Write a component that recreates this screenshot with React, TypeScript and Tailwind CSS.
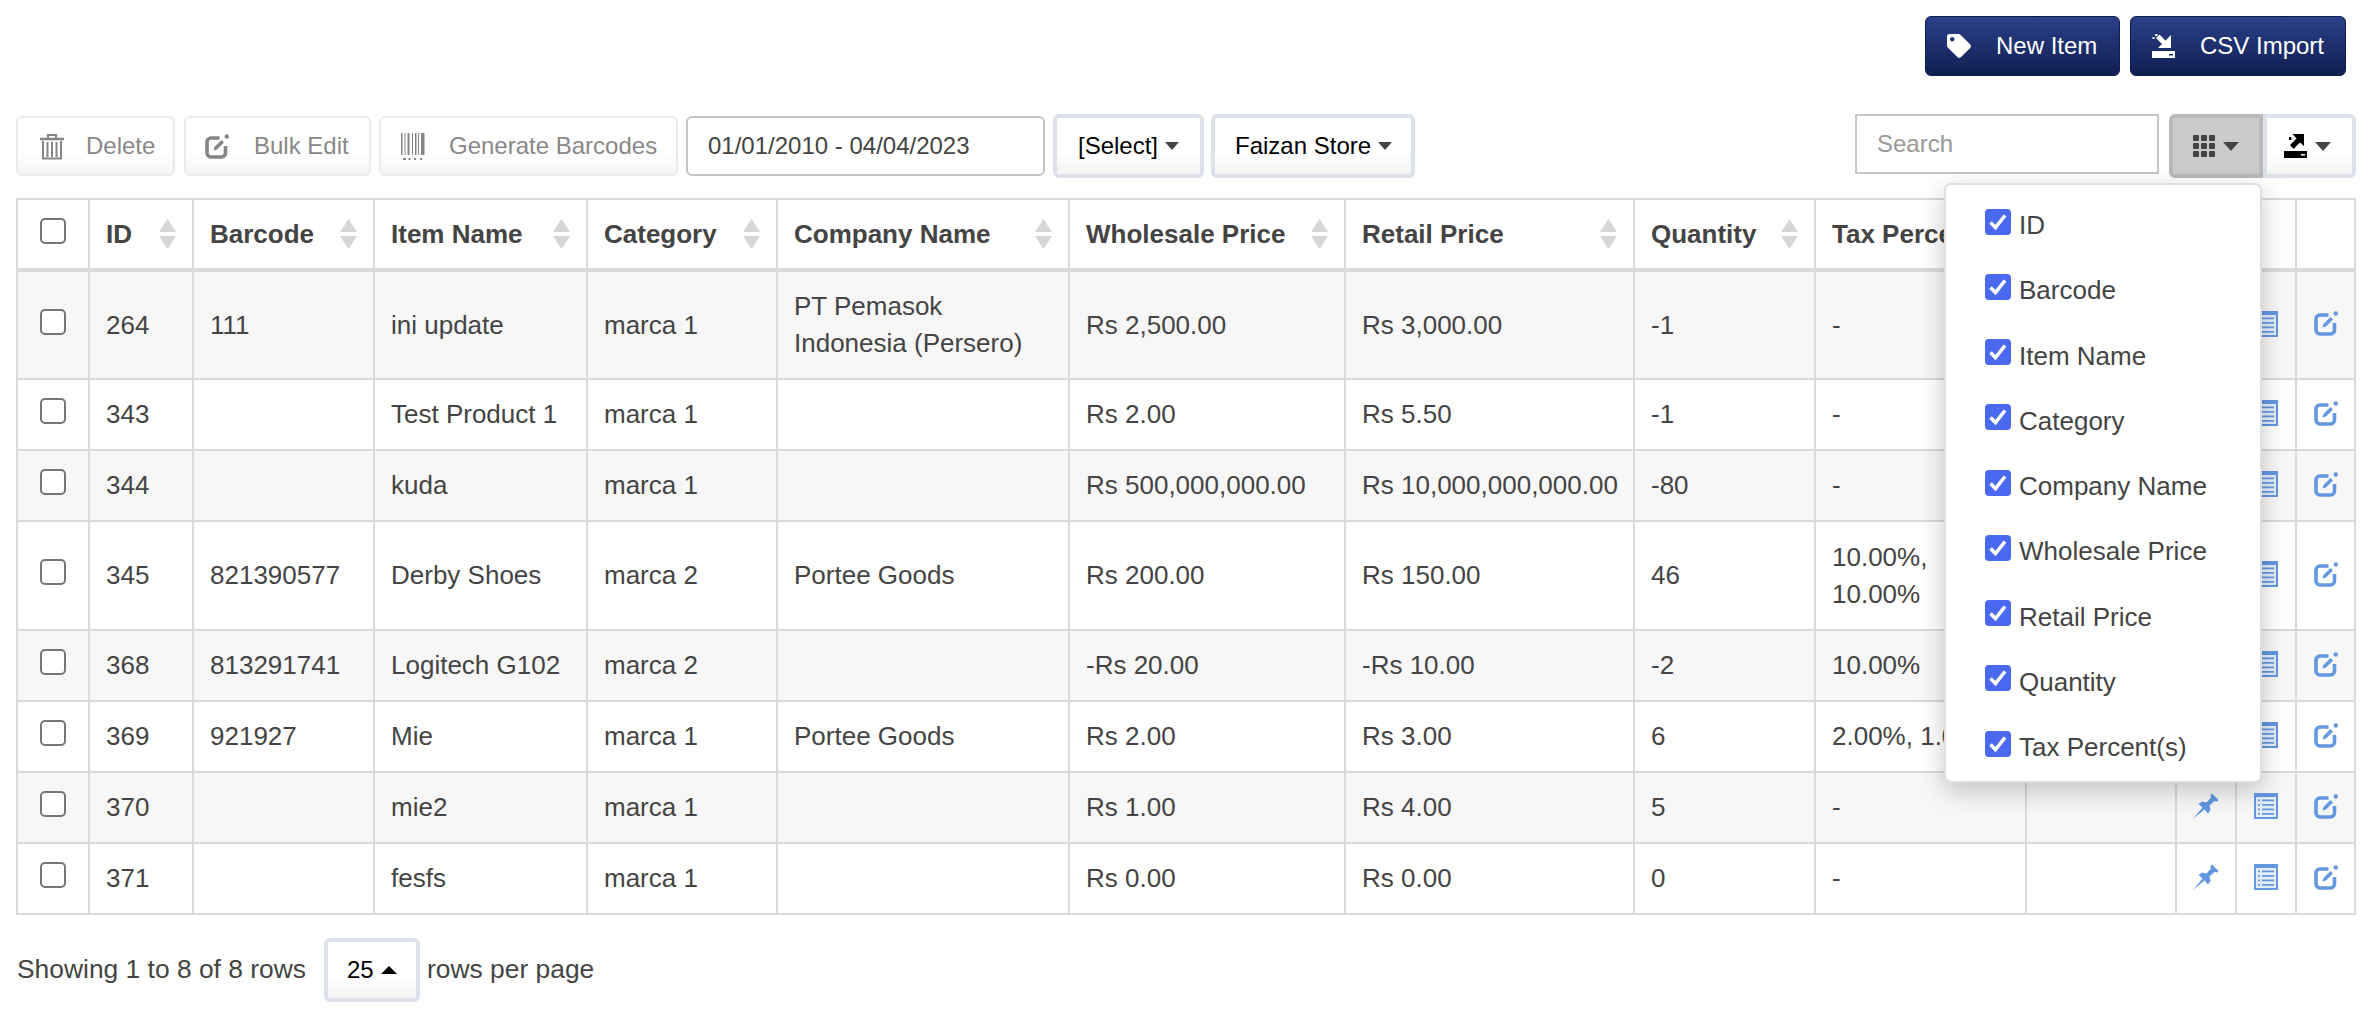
import type { ReactNode } from "react";
import { FaTag } from "react-icons/fa";

type Row = {
  id: number;
  barcode: string;
  name: string;
  category: string;
  company: ReactNode;
  wholesale: string;
  retail: string;
  quantity: string;
  tax: ReactNode;
  tall?: boolean;
};

const columns = [
  { label: "ID", width: "w-[104px]" },
  { label: "Barcode", width: "w-[181px]" },
  { label: "Item Name", width: "w-[213px]" },
  { label: "Category", width: "w-[190px]" },
  { label: "Company Name", width: "w-[292px]" },
  { label: "Wholesale Price", width: "w-[276px]" },
  { label: "Retail Price", width: "w-[289px]" },
  { label: "Quantity", width: "w-[181px]" },
  { label: "Tax Percent(s)", width: "w-[211px]" },
];

const rows: Row[] = [
  {
    id: 264,
    barcode: "111",
    name: "ini update",
    category: "marca 1",
    company: (
      <>
        PT Pemasok
        <br />
        Indonesia (Persero)
      </>
    ),
    wholesale: "Rs 2,500.00",
    retail: "Rs 3,000.00",
    quantity: "-1",
    tax: "-",
    tall: true,
  },
  { id: 343, barcode: "", name: "Test Product 1", category: "marca 1", company: "", wholesale: "Rs 2.00", retail: "Rs 5.50", quantity: "-1", tax: "-" },
  { id: 344, barcode: "", name: "kuda", category: "marca 1", company: "", wholesale: "Rs 500,000,000.00", retail: "Rs 10,000,000,000.00", quantity: "-80", tax: "-" },
  {
    id: 345,
    barcode: "821390577",
    name: "Derby Shoes",
    category: "marca 2",
    company: "Portee Goods",
    wholesale: "Rs 200.00",
    retail: "Rs 150.00",
    quantity: "46",
    tax: (
      <>
        10.00%,
        <br />
        10.00%
      </>
    ),
    tall: true,
  },
  { id: 368, barcode: "813291741", name: "Logitech G102", category: "marca 2", company: "", wholesale: "-Rs 20.00", retail: "-Rs 10.00", quantity: "-2", tax: "10.00%" },
  { id: 369, barcode: "921927", name: "Mie", category: "marca 1", company: "Portee Goods", wholesale: "Rs 2.00", retail: "Rs 3.00", quantity: "6", tax: "2.00%, 1.00%" },
  { id: 370, barcode: "", name: "mie2", category: "marca 1", company: "", wholesale: "Rs 1.00", retail: "Rs 4.00", quantity: "5", tax: "-" },
  { id: 371, barcode: "", name: "fesfs", category: "marca 1", company: "", wholesale: "Rs 0.00", retail: "Rs 0.00", quantity: "0", tax: "-" },
];

function Caret() {
  return <span className="ml-[7px] inline-block h-0 w-0 border-x-[7.5px] border-t-[8px] border-x-transparent border-t-[#444]" />;
}

function BigCaret() {
  return <span className="inline-block h-0 w-0 border-x-[8px] border-t-[9px] border-x-transparent border-t-[#444]" />;
}

function TrashIcon() {
  return (
    <svg viewBox="0 0 24 27" className="h-[27px] w-[24px] text-[#858585]" fill="none" stroke="currentColor" strokeWidth="2">
      <path d="M0 6h24" strokeWidth="2.600" />
      <path d="M8 5V2h8v3" />
      <path d="M3 8v17.500h18V8M7.500 9v15M12 9v15M16.500 9v15" />
    </svg>
  );
}

function EditIcon({ className }: { className: string }) {
  return (
    <svg viewBox="0 0 24 25" className={className} fill="none" stroke="currentColor">
      <path d="M14.500 4H6a4 4 0 0 0-4 4v11a4 4 0 0 0 4 4h10.500a4 4 0 0 0 4-4v-7" strokeWidth="3.600" />
      <path d="M8.500 16.500 9.500 13l7-7 2.500 2.500-7 7z" fill="currentColor" stroke="none" />
      <circle cx="21.800" cy="2.500" r="2.200" fill="currentColor" stroke="none" />
    </svg>
  );
}

function BarcodeIcon() {
  return (
    <svg viewBox="0 0 24 27" className="h-[27px] w-[24px] text-[#858585]" fill="currentColor">
      <path d="M0 0h1.500v22H0zM3.500 0h1v22h-1zM6.500 0h2v22h-2zM11 0h1v22h-1zM14 0h1.500v22H14zM17 0h1v22h-1zM20 0h3.500v22H20z" />
      <path d="M2 25h3v2H2zM7.500 25h2v2h-2zM13 25h2v2h-2zM19 25h2v2h-2z" />
    </svg>
  );
}

function ImportIcon({ className }: { className: string }) {
  return (
    <svg viewBox="0 0 23 24" className={className} fill="currentColor">
      <path d="M19 1v13H6l4-4-6-6 3.500-3.500 6 6L18 2z" />
      <path d="M3 0h2.500v2H3zM0.500 3h2v2h-2z" />
      <path fillRule="evenodd" d="M0 17h23v7H0zm17 3v1.500h4V20z" />
    </svg>
  );
}

function ExportIcon({ className }: { className: string }) {
  return (
    <svg viewBox="0 0 23 24" className={className} fill="currentColor">
      <path d="M20 0v12l-4-3.500-6.500 6.500L6 11l6.500-6.500L8.500 0z" />
      <path d="M5 3h2.500v3H5z" />
      <path fillRule="evenodd" d="M0 17h23v7H0zm17 3v1.500h4V20z" />
    </svg>
  );
}

function GridIcon() {
  return (
    <svg viewBox="0 0 22 22" className="h-[22px] w-[22px] text-[#444]" fill="currentColor">
      {[0, 8, 16].map((y) => [0, 8, 16].map((x) => <rect key={`${x}-${y}`} x={x} y={y} width="6" height="6" rx="1" />))}
    </svg>
  );
}

function PinIcon() {
  return (
    <svg viewBox="0 0 26 26" className="h-[26px] w-[26px] text-[#6397e0]" fill="currentColor">
      <path d="M0 26 9.500 14.500 5.500 11 9 8.500l4.500 1 4.500-5-.5-2.500L19 .5 25.500 7 24 8.500 21.500 8l-5 4.500 1 4.500-2.500 3.500-3.500-4z" />
    </svg>
  );
}

function ListIcon() {
  return (
    <svg viewBox="0 0 24 26" className="h-[26px] w-[24px]">
      <rect width="24" height="26" fill="#6397e0" />
      <rect x="2" y="4" width="20" height="20" fill="#e4edf9" />
      <path d="M8 6.500h12v1.800H8zM8 11h12v1.800H8zM8 15.500h12v1.800H8zM8 20h12v1.800H8zM4 6.500h2v1.800H4zM4 11h2v1.800H4zM4 15.500h2v1.800H4zM4 20h2v1.800H4z" fill="#6397e0" />
    </svg>
  );
}

function SortIcon() {
  return (
    <svg viewBox="0 0 17 30" className="h-[30px] w-[17px] shrink-0 text-[#d6d6d6]" fill="currentColor">
      <path d="M8.500 0 17 13H0zM0 17h17L8.500 30z" />
    </svg>
  );
}

function Checkbox() {
  return <input type="checkbox" className="mb-[7px] block h-[26px] w-[26px] appearance-none rounded-[5px] border-2 border-[#767676] bg-white" />;
}

function CheckedBox() {
  return (
    <span className="mb-[8px] flex h-[26px] w-[26px] shrink-0 items-center justify-center rounded-[4px] bg-[#4a69f0]">
      <svg viewBox="0 0 26 26" className="h-[26px] w-[26px]" fill="none" stroke="white" strokeWidth="3.600">
        <path d="M5.500 13.500 10.500 18.500 20 6.500" />
      </svg>
    </span>
  );
}

function ActionButton({ icon, label, className }: { icon: ReactNode; label: string; className: string }) {
  return (
    <button
      type="button"
      className={`flex h-[60px] items-center rounded-[6px] border-2 border-[#ebebeb] bg-gradient-to-b from-white from-60% to-[#f5f5f5] text-[24px] text-[#888] ${className}`}
    >
      {icon}
      <span>{label}</span>
    </button>
  );
}

function PrimaryButton({ icon, label, className }: { icon: ReactNode; label: string; className: string }) {
  return (
    <button
      type="button"
      className={`flex h-[60px] items-center rounded-[6px] border border-[#101d4d] bg-gradient-to-b from-[#2b4088] to-[#101f52] text-[24px] text-white ${className}`}
    >
      {icon}
      <span>{label}</span>
    </button>
  );
}

const cell = "border-2 border-[#dadada] px-[16px] align-middle";

export default function App() {
  return (
    <div className="relative min-h-[1014px] overflow-hidden bg-white font-['Liberation_Sans',Arial,sans-serif] text-[#444]">
      <div className="flex justify-end gap-[10px] pr-[32px] pt-[16px]">
        <PrimaryButton className="w-[195px] pl-[21px]" icon={<FaTag className="mr-[25px] h-[24px] w-[24px]" />} label="New Item" />
        <PrimaryButton className="w-[216px] pl-[21px]" icon={<ImportIcon className="mr-[25px] h-[24px] w-[23px]" />} label="CSV Import" />
      </div>

      <div className="mt-[38px] flex h-[64px] items-center pl-[16px] pr-[22px]">
        <ActionButton className="w-[159px] pl-[22px]" icon={<span className="mr-[22px]"><TrashIcon /></span>} label="Delete" />
        <ActionButton className="ml-[9px] w-[187px] pl-[19px]" icon={<EditIcon className="mr-[25px] h-[25px] w-[24px] text-[#858585]" />} label="Bulk Edit" />
        <ActionButton className="ml-[8px] w-[299px] pl-[20px]" icon={<span className="mr-[24px]"><BarcodeIcon /></span>} label="Generate Barcodes" />
        <div className="ml-[8px] flex h-[60px] w-[359px] items-center rounded-[6px] border-2 border-[#c4c4c4] pl-[20px] text-[24px]">01/01/2010 - 04/04/2023</div>
        <button type="button" className="ml-[8px] flex h-[64px] w-[151px] items-center rounded-[6px] border-4 border-[#dde1ea] bg-gradient-to-b from-white from-60% to-[#f4f4f4] pl-[21px] text-[24px] text-black">
          [Select]
          <Caret />
        </button>
        <button type="button" className="ml-[7px] flex h-[64px] w-[204px] items-center rounded-[6px] border-4 border-[#dde1ea] bg-gradient-to-b from-white from-60% to-[#f4f4f4] pl-[20px] text-[24px] text-black">
          Faizan Store
          <Caret />
        </button>

        <input
          placeholder="Search"
          className="ml-auto h-[60px] w-[304px] self-start border-2 border-[#c8c8c8] pl-[20px] text-[24px] outline-none placeholder:text-[#999]"
        />
        <div className="relative ml-[10px]">
          <button type="button" className="flex h-[64px] w-[94px] items-center gap-[8px] rounded-l-[6px] border-4 border-[#b9b9b9] bg-[#cbcbcb] pl-[20px]">
            <GridIcon />
            <BigCaret />
          </button>
          <div className="absolute right-[1px] top-[69px] z-10 w-[318px] rounded-[7px] border-2 border-[#dedede] bg-white pb-[1px] pl-[39px] pt-[8px] text-[26px] shadow-[0_8px_26px_rgba(0,0,0,0.22)]">
            {columns.map((column) => (
              <div key={column.label} className="flex h-[65.25px] items-center gap-[8px]">
                <CheckedBox />
                <span className="whitespace-nowrap">{column.label}</span>
              </div>
            ))}
          </div>
        </div>
        <button type="button" className="flex h-[64px] w-[93px] items-center gap-[8px] rounded-r-[6px] border-4 border-[#dde1ea] bg-gradient-to-b from-white from-60% to-[#f4f4f4] pl-[17px]">
          <ExportIcon className="h-[24px] w-[23px] text-black" />
          <BigCaret />
        </button>
      </div>

      <table className="ml-[16px] mt-[20px] w-[2339px] table-fixed border-collapse text-[26px] leading-[37px]">
        <colgroup>
          <col className="w-[72px]" />
          {columns.map((column) => (
            <col key={column.label} className={column.width} />
          ))}
          <col className="w-[150px]" />
          <col className="w-[60px]" />
          <col className="w-[60px]" />
          <col className="w-[59px]" />
        </colgroup>
        <thead>
          <tr className="h-[71px]">
            <th className={`${cell} border-b-4`}>
              <div className="flex justify-center">
                <Checkbox />
              </div>
            </th>
            {columns.map((column) => (
              <th key={column.label} className={`${cell} border-b-4 text-left font-bold`}>
                <div className="flex items-center justify-between">
                  <span className="shrink-0 whitespace-nowrap">{column.label}</span>
                  <SortIcon />
                </div>
              </th>
            ))}
            <th className={`${cell} border-b-4`} />
            <th className={`${cell} border-b-4`} />
            <th className={`${cell} border-b-4`} />
            <th className={`${cell} border-b-4`} />
          </tr>
        </thead>
        <tbody>
          {rows.map((row, index) => (
            <tr key={row.id} className={`${row.tall ? "h-[109px]" : "h-[71px]"} ${index % 2 === 0 ? "bg-[#f7f7f7]" : "bg-white"}`}>
              <td className={cell}>
                <div className="flex justify-center">
                  <Checkbox />
                </div>
              </td>
              <td className={cell}>{row.id}</td>
              <td className={cell}>{row.barcode}</td>
              <td className={`${cell} whitespace-nowrap`}>{row.name}</td>
              <td className={cell}>{row.category}</td>
              <td className={`${cell} whitespace-nowrap`}>{row.company}</td>
              <td className={`${cell} whitespace-nowrap`}>{row.wholesale}</td>
              <td className={`${cell} whitespace-nowrap`}>{row.retail}</td>
              <td className={cell}>{row.quantity}</td>
              <td className={`${cell} whitespace-nowrap`}>{row.tax}</td>
              <td className={cell} />
              <td className={`${cell} px-0`}>
                <div className="mb-[3px] flex justify-center">
                  <PinIcon />
                </div>
              </td>
              <td className={`${cell} px-0`}>
                <div className="mb-[3px] flex justify-center">
                  <ListIcon />
                </div>
              </td>
              <td className={`${cell} px-0`}>
                <div className="mb-[3px] flex justify-center">
                  <EditIcon className="h-[25px] w-[24px] text-[#6397e0]" />
                </div>
              </td>
            </tr>
          ))}
        </tbody>
      </table>

      <div className="ml-[17px] mt-[23px] flex items-center text-[26.4px]">
        <span>Showing 1 to 8 of 8 rows</span>
        <button type="button" className="ml-[18px] flex h-[64px] w-[96px] items-center rounded-[6px] border-4 border-[#dde1ea] bg-gradient-to-b from-white from-60% to-[#f4f4f4] pl-[19px] text-[24px] text-black">
          25
          <span className="ml-[7px] inline-block h-0 w-0 border-x-[8px] border-b-[8px] border-x-transparent border-b-black" />
        </button>
        <span className="ml-[7px]">rows per page</span>
      </div>
    </div>
  );
}
